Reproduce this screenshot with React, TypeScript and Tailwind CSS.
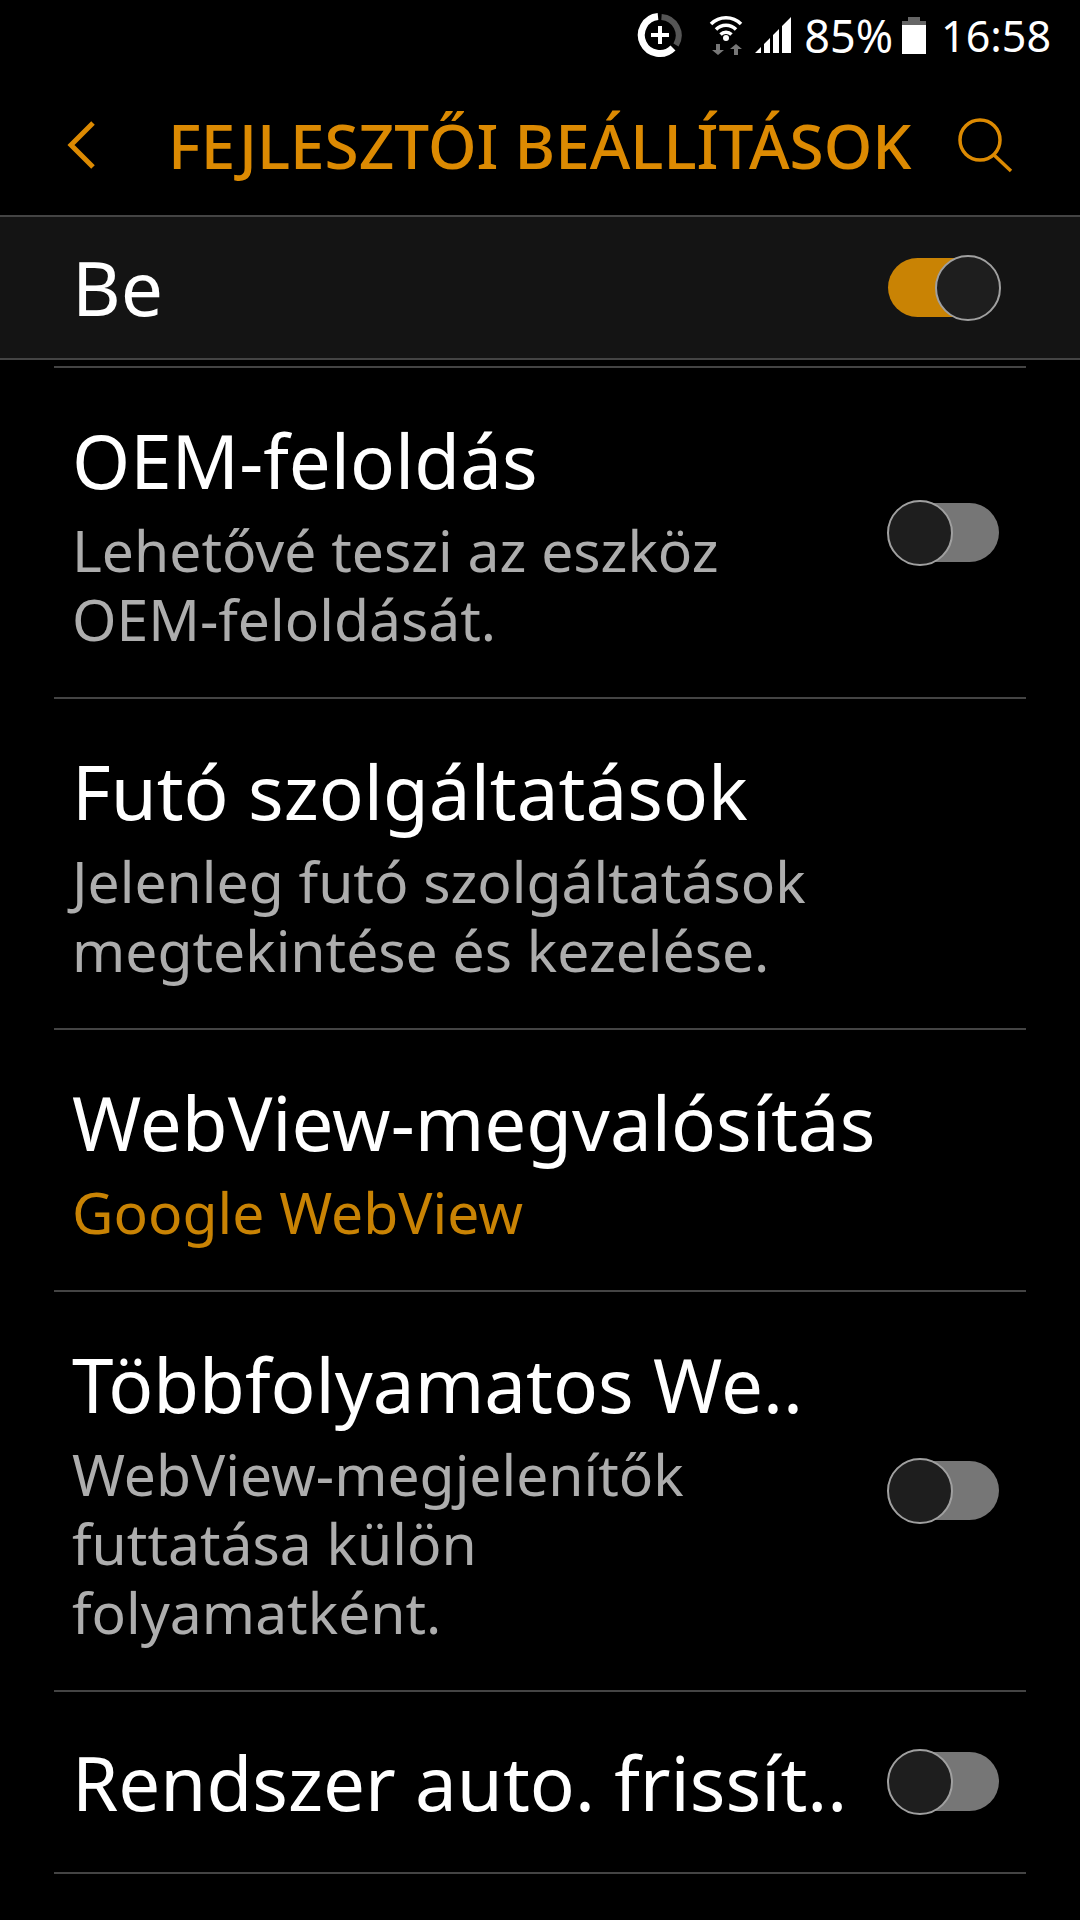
const FONT = "font-['Noto_Sans','Open_Sans',sans-serif]";

function Toggle({ on }: { on?: boolean }) {
  return (
    <div className="relative h-[66px] w-[114px] shrink-0">
      <div className={`absolute top-[3px] h-[59px] w-[111px] rounded-full ${on ? "left-0 bg-[#c98304]" : "left-[1px] bg-[#767676]"}`} />
      <div className={`absolute top-0 box-border h-[66px] w-[66px] rounded-full border-2 border-[#a0a0a0] bg-[#1e1e1e] ${on ? "left-[47px]" : "left-0"}`} />
    </div>
  );
}

function Row({ title, sub, toggle, h, accent }: { title: string; sub?: string; toggle?: boolean; h: string; accent?: boolean }) {
  return (
    <div className={`mx-[54px] flex items-center justify-between border-b-2 border-[#444444] ${h}`}>
      <div className="min-w-0 pl-[18px]">
        <div className={`text-[74.5px] leading-[96px] text-white whitespace-nowrap ${sub ? "mb-[8px]" : ""}`}>{title}</div>
        {sub && (
          <div className={`text-[57px] leading-[69px] whitespace-pre ${accent ? "text-[#c98304]" : "text-[#adadad]"}`}>{sub}</div>
        )}
      </div>
      {toggle && <div className="mr-[25px]"><Toggle /></div>}
    </div>
  );
}

export default function App() {
  return (
    <div className={`h-[1920px] w-[1080px] overflow-hidden bg-black ${FONT}`}>
      <div className="flex h-[70px] items-center justify-end pr-[29px] text-white">
        <svg width="46" height="46" viewBox="0 0 46 46" className="mr-[26px]">
          <path d="M24.500 5 A18.500 18.500 0 0 1 39 33" fill="none" stroke="#555" strokeWidth="6" />
          <path d="M21 4.600 A18.500 18.500 0 1 0 36 36" fill="none" stroke="#fff" strokeWidth="7" />
          <circle cx="23" cy="23" r="11" fill="none" stroke="#fff" strokeWidth="0" />
          <path d="M23 14v18M14 23h18" stroke="#fff" strokeWidth="4" />
        </svg>
        <svg width="34" height="40" viewBox="0 0 34 40" className="mr-[12px]">
          <path d="M2 9 A21 21 0 0 1 32 9 M7 14.5 A14 14 0 0 1 27 14.5 M11.5 19.5 A8 8 0 0 1 22.500 19.500" fill="none" stroke="#fff" strokeWidth="3.500" />
          <circle cx="17" cy="23" r="3" fill="#fff" />
          <path d="M7 29v6H3l6 5 6-5h-4v-6zM25 40v-6h-4l6-5 6 5h-4v6z" fill="#777" />
        </svg>
        <svg width="36" height="36" viewBox="0 0 36 36" className="mr-[13px]">
          <path d="M0 36 L6 30 V36Z M9 27 L15 21 V36 H9Z M18 18 L24 12 V36 H18Z M27 9 L36 0 V36 H27Z" fill="#fff" />
        </svg>
        <span className="text-[45px] leading-none mr-[9px]">85%</span>
        <svg width="24" height="37" viewBox="0 0 24 37" className="mr-[15px]">
          <path d="M6 0h12v4h6v6H0V4h6z" fill="#666" />
          <rect x="0" y="8" width="24" height="29" fill="#fff" />
        </svg>
        <span className="text-[43px] leading-none">16:58</span>
      </div>
      <div className="flex h-[145px] items-center pt-[4px]">
        <svg width="30" height="50" viewBox="0 0 30 50" className="ml-[66px] text-[#dc8a02]">
          <path d="M27 3 L5 25 L27 47" fill="none" stroke="currentColor" strokeWidth="5" />
        </svg>
        <div className="ml-[72px] w-[789px] whitespace-nowrap text-[62px] font-medium leading-none text-[#dc8a02]">FEJLESZTŐI BEÁLLÍTÁSOK</div>
        <svg width="56" height="56" viewBox="0 0 56 56" className="text-[#dc8a02]">
          <circle cx="23" cy="23" r="20" fill="none" stroke="currentColor" strokeWidth="3.500" />
          <path d="M37 38 L54 54" stroke="currentColor" strokeWidth="3.500" />
        </svg>
      </div>
      <div className="flex h-[145px] items-center justify-between border-y-2 border-[#444444] bg-[#141414] pl-[72px] pr-[78px]">
        <span className="text-[75px] leading-none text-white">Be</span>
        <Toggle on />
      </div>
      <div className="mx-[54px] mt-[6px] border-t-2 border-[#444444]" />
      <Row h="h-[331px]" title="OEM-feloldás" sub={"Lehetővé teszi az eszköz\nOEM-feloldását."} toggle />
      <Row h="h-[331px]" title="Futó szolgáltatások" sub={"Jelenleg futó szolgáltatások\nmegtekintése és kezelése."} />
      <Row h="h-[262px]" title="WebView-megvalósítás" sub="Google WebView" accent />
      <Row h="h-[400px]" title="Többfolyamatos We.." sub={"WebView-megjelenítők\nfuttatása külön\nfolyamatként."} toggle />
      <Row h="h-[182px]" title="Rendszer auto. frissít.." toggle />
    </div>
  );
}
